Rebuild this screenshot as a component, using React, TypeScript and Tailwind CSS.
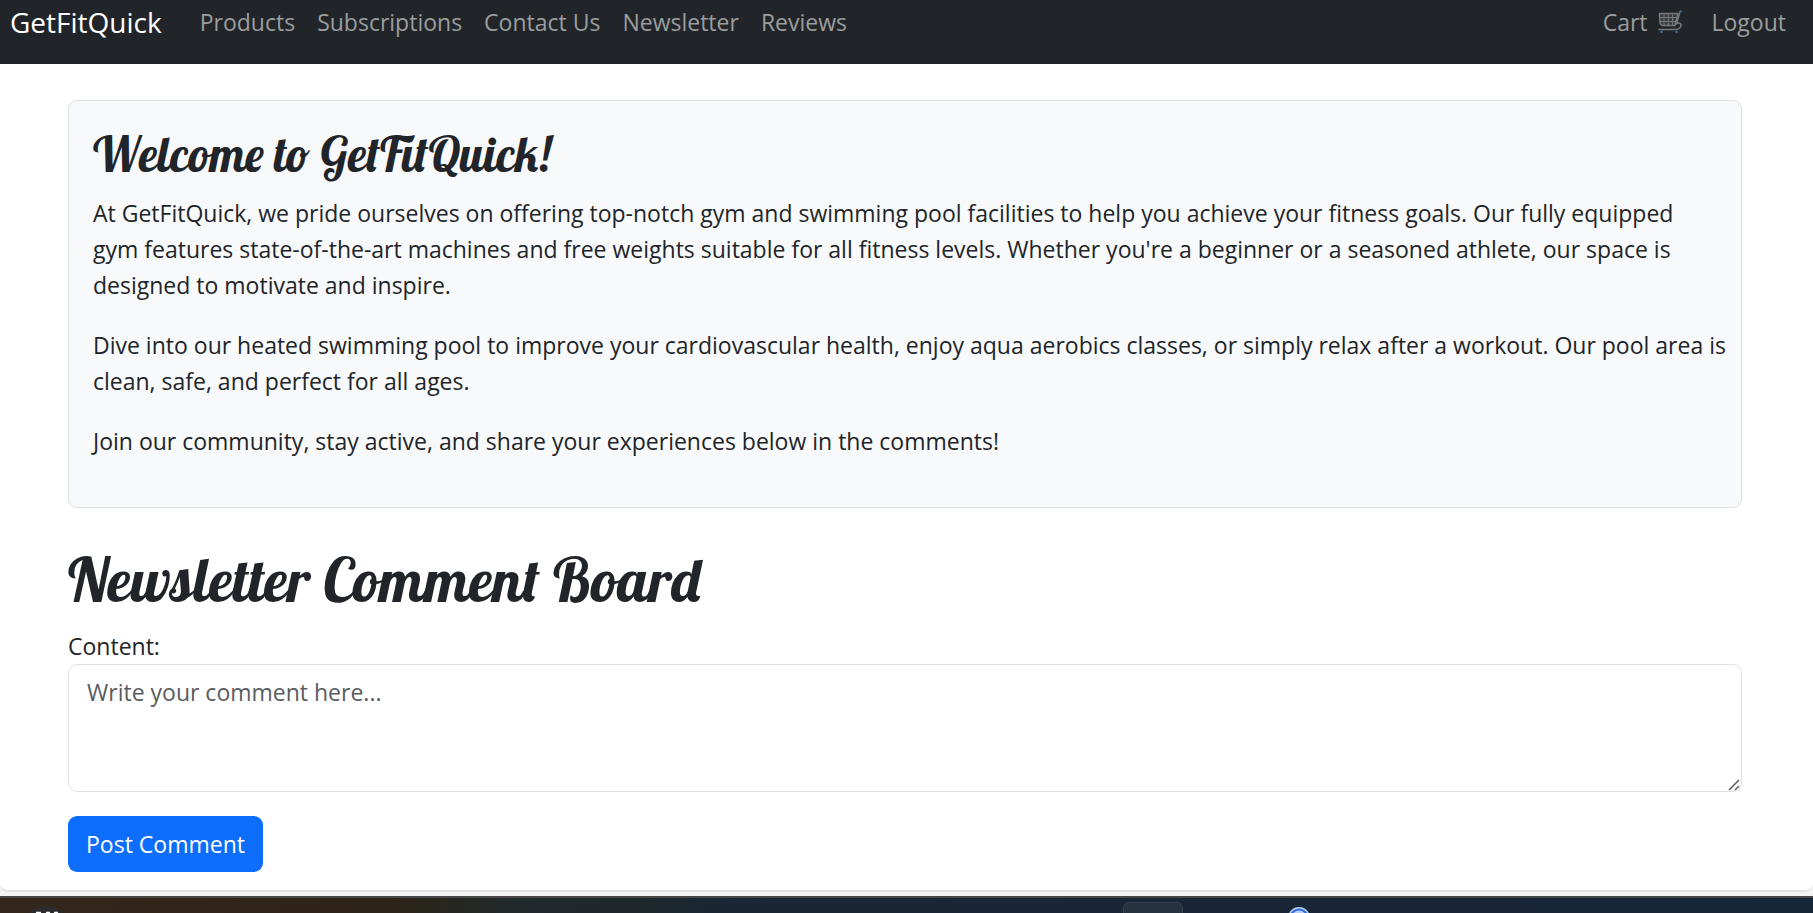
import React from "react";

const links = ["Products", "Subscriptions", "Contact Us", "Newsletter", "Reviews"];

function CartIcon() {
  return (
    <svg viewBox="0 0 24 24" className="h-6 w-6" fill="none" aria-hidden="true">
      <path d="M1.5 3.5H20L17 15.5H4L2 13.5Z" fill="#3a3c40" stroke="#77777b" strokeWidth="1.5" strokeLinejoin="round" />
      <path d="M6 3.5V15.5M10.3 3.5V15.5M14.6 3.5V15.5M2 7.5H18.5M2 11.5H18" stroke="#77777b" strokeWidth="1" />
      <path d="M22 2L18.5 13.5C22 12 24 14.5 22.5 17C21.5 19 19 19.5 16 19.5H1" stroke="#77757d" strokeWidth="1.6" strokeLinecap="round" />
      <path d="M21 2L24 1" stroke="#365f8e" strokeWidth="2" />
      <circle cx="3.5" cy="21.7" r="1.3" fill="#3f6f9f" />
      <circle cx="18.5" cy="21.7" r="1.3" fill="#3f6f9f" />
    </svg>
  );
}

export default function App() {
  return (
    <div className="flex min-h-screen flex-col bg-[#f3f3f3] font-['Segoe_UI','Open_Sans',sans-serif] text-[23px] leading-9 text-[#212529]">
      <div className="rounded-b-lg border-b-2 border-[#e3e3e3] bg-white">
        <nav className="flex h-16 items-start bg-[#212529] pt-1 pr-[27px] pl-[10px] text-[#9b9d9e]">
          <a href="#home" className="mr-[38px] text-[28px] text-white">GetFitQuick</a>
          <ul className="flex flex-1 gap-[22px]">
            {links.map((name) => (
              <li key={name}>
                <a href={"#" + name.toLowerCase().replace(" ", "-")}>{name}</a>
              </li>
            ))}
          </ul>
          <ul className="flex gap-[30px]">
            <li>
              <a href="#cart" className="flex items-center gap-[10px]">Cart <CartIcon /></a>
            </li>
            <li>
              <a href="#logout">Logout</a>
            </li>
          </ul>
        </nav>

        <main className="mr-[71px] ml-[68px] pt-9 pb-[18px]">
          <section className="mb-9 rounded-[9px] border border-[#dee2e6] bg-[#f8f9fa] py-6 pr-3 pl-6">
            <h2 className="mb-3 font-['Lobster',serif] text-[48px] leading-[58px] font-medium">Welcome to GetFitQuick!</h2>
            <p className="mb-6">
              At GetFitQuick, we pride ourselves on offering top-notch gym and swimming pool facilities to help you achieve your fitness goals. Our fully equipped <br />gym features state-of-the-art machines and free weights suitable for all fitness levels. Whether you're a beginner or a seasoned athlete, our space is designed to motivate and inspire.
            </p>
            <p className="mb-6">
              Dive into our heated swimming pool to improve your cardiovascular health, enjoy aqua aerobics classes, or simply relax after a workout. Our pool area is clean, safe, and perfect for all ages.
            </p>
            <p className="mb-6">Join our community, stay active, and share your experiences below in the comments!</p>
          </section>

          <h1 className="mb-3 font-['Lobster',serif] text-[60px] leading-[72px] font-medium">Newsletter Comment Board</h1>
          <form onSubmit={(e) => e.preventDefault()}>
            <label htmlFor="content" className="block">Content:</label>
            <div className="relative mb-6">
              <textarea
                id="content"
                rows={3}
                placeholder="Write your comment here..."
                className="block w-full resize-none rounded-[9px] border border-[#dee2e6] bg-white px-[18px] py-[9px] placeholder:text-[#595c5f]"
              />
              <svg viewBox="0 0 12 12" className="pointer-events-none absolute right-[2px] bottom-[1px] h-3 w-3" fill="none" aria-hidden="true">
                <path d="M1 11L11 1M7 11L11 7" stroke="#5c5c5c" strokeWidth="1.5" />
              </svg>
            </div>
            <button type="submit" className="rounded-[9px] bg-[#0d6efd] px-[18px] py-[10px] text-white">Post Comment</button>
          </form>
        </main>
      </div>

      <footer className="mt-1 flex flex-1 items-end border-t-2 border-[#464746] bg-[linear-gradient(90deg,#33261a_0%,#2e2417_21%,#202a2c_29%,#1f292b_35%,#182636_41%,#172538_100%)] pl-[30px]">
        <svg viewBox="0 0 32 7" className="h-[7px] w-8" aria-hidden="true">
          <path d="M0 7C4 1.5 9 0 16 0S28 1.5 32 7Z" fill="#2c2c2c" />
          <path d="M6 6.5H11M16 6.5H20M24 6.5H28" stroke="#fff" strokeWidth="1.5" />
        </svg>
        <div className="ml-[1061px] h-[11px] w-[60px] rounded-t-md border border-b-0 border-[#344250] bg-[#253341]" />
        <svg viewBox="0 0 22 6" className="ml-[105px] h-[6px] w-[22px]" aria-hidden="true">
          <circle cx="11" cy="11" r="11" fill="#b9cdf0" />
          <circle cx="11" cy="11" r="8.5" fill="none" stroke="#2f6fe0" strokeWidth="2" />
        </svg>
      </footer>
    </div>
  );
}
